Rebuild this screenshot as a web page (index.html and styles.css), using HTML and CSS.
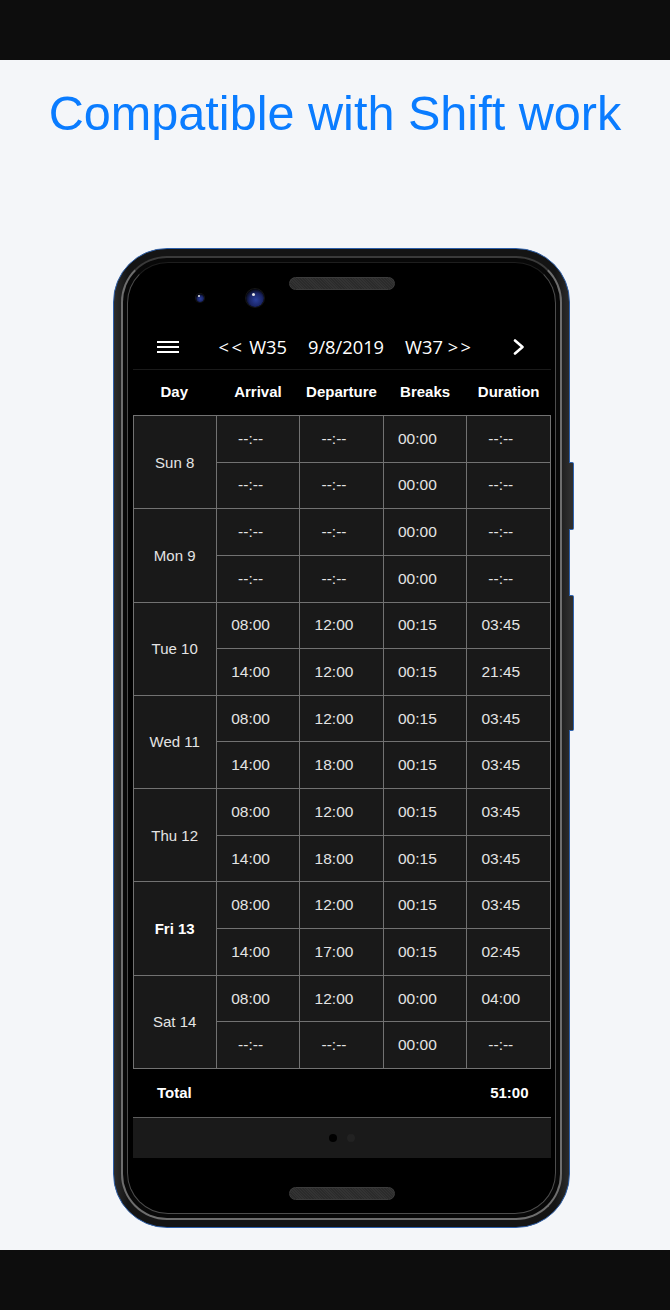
FILE: index.html
```html
<!DOCTYPE html>
<html lang="en">
<head>
<meta charset="utf-8">
<title>Compatible with Shift work</title>
<link rel="stylesheet" href="styles.css">
</head>
<body>
<div class="bar"></div>
<main class="stage">
  <h1 class="title">Compatible with Shift work</h1>
  <div class="phone">
    <span class="side-btn side-btn-1"></span>
    <span class="side-btn side-btn-2"></span>
    <div class="ring">
      <div class="screen">
        <div class="bezel">
          <span class="cam cam-sm"></span>
          <span class="cam cam-lg"></span>
          <span class="speaker"></span>
        </div>
        <nav class="nav">
          <span class="menu"><i></i><i></i><i></i></span>
          <span class="nav-item nav-first"><span class="arrows">&lt;&lt;</span> W35</span>
          <span class="nav-item">9/8/2019</span>
          <span class="nav-item">W37 <span class="arrows">&gt;&gt;</span></span>
          <svg class="chev" width="12" height="16" viewBox="0 0 12 16"><polyline points="2,1.5 9.5,8 2,14.5" fill="none" stroke="#fff" stroke-width="2.6" stroke-linecap="round" stroke-linejoin="round"/></svg>
        </nav>
        <div class="thead">
          <span>Day</span><span>Arrival</span><span>Departure</span><span>Breaks</span><span>Duration</span>
        </div>
        <div class="grid">
          <div class="day">Sun 8</div>
          <div class="c">--:--</div><div class="c">--:--</div><div class="c">00:00</div><div class="c">--:--</div>
          <div class="c">--:--</div><div class="c">--:--</div><div class="c">00:00</div><div class="c">--:--</div>

          <div class="day">Mon 9</div>
          <div class="c">--:--</div><div class="c">--:--</div><div class="c">00:00</div><div class="c">--:--</div>
          <div class="c">--:--</div><div class="c">--:--</div><div class="c">00:00</div><div class="c">--:--</div>

          <div class="day">Tue 10</div>
          <div class="c">08:00</div><div class="c">12:00</div><div class="c">00:15</div><div class="c">03:45</div>
          <div class="c">14:00</div><div class="c">12:00</div><div class="c">00:15</div><div class="c">21:45</div>

          <div class="day">Wed 11</div>
          <div class="c">08:00</div><div class="c">12:00</div><div class="c">00:15</div><div class="c">03:45</div>
          <div class="c">14:00</div><div class="c">18:00</div><div class="c">00:15</div><div class="c">03:45</div>

          <div class="day">Thu 12</div>
          <div class="c">08:00</div><div class="c">12:00</div><div class="c">00:15</div><div class="c">03:45</div>
          <div class="c">14:00</div><div class="c">18:00</div><div class="c">00:15</div><div class="c">03:45</div>

          <div class="day today">Fri 13</div>
          <div class="c">08:00</div><div class="c">12:00</div><div class="c">00:15</div><div class="c">03:45</div>
          <div class="c">14:00</div><div class="c">17:00</div><div class="c">00:15</div><div class="c">02:45</div>

          <div class="day">Sat 14</div>
          <div class="c">08:00</div><div class="c">12:00</div><div class="c">00:00</div><div class="c">04:00</div>
          <div class="c">--:--</div><div class="c">--:--</div><div class="c">00:00</div><div class="c">--:--</div>
        </div>
        <div class="total"><span>Total</span><span>51:00</span></div>
        <div class="pager"><span class="dot dot-on"></span><span class="dot"></span></div>
        <span class="speaker speaker-bottom"></span>
      </div>
    </div>
  </div>
</main>
<div class="bar"></div>
</body>
</html>
```

FILE: styles.css
```css
* { box-sizing: border-box; }

html, body {
  margin: 0;
  padding: 0;
  background: #0d0d0d;
}

body {
  width: 670px;
  height: 1310px;
  font-family: "Liberation Sans", Arial, sans-serif;
}

.bar {
  height: 60px;
  background: #0d0d0d;
}

.stage {
  height: 1190px;
  background: #f4f6f9;
  padding-top: 29px;
}

.title {
  margin: 0;
  text-align: center;
  font-family: "Liberation Sans", Arial, sans-serif;
  font-weight: 400;
  font-size: 48.6px;
  line-height: 48px;
  color: #0a7cff;
}

.phone {
  position: relative;
  width: 457px;
  height: 980px;
  margin: 111px 0 0 113px;
  border: 1px solid #2c5ea8;
  border-radius: 54px;
  padding: 7px;
  background: linear-gradient(90deg, #2c2c2c 0%, #141414 3%, #141414 97%, #2c2c2c 100%);
}

.side-btn {
  position: absolute;
  right: -5px;
  width: 5px;
  background: #2d2d2d;
  border: 1px solid #2f64b0;
  border-left: none;
  border-radius: 0 2px 2px 0;
}
.side-btn-1 { top: 213px; height: 68px; }
.side-btn-2 { top: 346px; height: 136px; }

.ring {
  height: 100%;
  border: 2px solid #6e6e6e;
  border-top-color: #3a3a3a;
  border-radius: 46px;
  padding: 4px;
  background: #080808;
}

.screen {
  height: 100%;
  border: 1.5px solid #4d4d4d;
  border-top-color: #1e1e1e;
  border-radius: 41px;
  background: #000;
  padding: 0 4.5px;
  display: flex;
  flex-direction: column;
  overflow: hidden;
}

/* top bezel */
.bezel {
  height: 61.5px;
  flex: none;
  display: flex;
  align-items: flex-start;
  padding-left: 63px;
}

.cam {
  border-radius: 50%;
  flex: none;
  background: radial-gradient(circle at 55% 60%, #2a3f9a 0%, #1a2566 45%, #05060d 75%);
  box-shadow: 0 0 0 1px #151515;
  position: relative;
}
.cam::after {
  content: "";
  position: absolute;
  border-radius: 50%;
  background: #e8e8e8;
}
.cam-sm { width: 8px; height: 8px; margin-top: 30.5px; }
.cam-sm::after { width: 2px; height: 2px; left: 2px; top: 1.5px; }
.cam-lg { width: 18px; height: 18px; margin-top: 26px; margin-left: 42px; }
.cam-lg::after { width: 3px; height: 3px; left: 6px; top: 4px; }

.speaker {
  width: 106px;
  height: 13px;
  flex: none;
  border-radius: 7px;
  background: repeating-linear-gradient(45deg, #2b2b2b 0 1px, #333 1px 2px);
  border: 1px solid #3c3c3c;
  margin-top: 13.5px;
  margin-left: 25px;
}
.speaker-bottom {
  margin: 29px auto 0;
}

/* nav */
.nav {
  height: 45px;
  flex: none;
  display: flex;
  align-items: center;
  padding-left: 24px;
  padding-right: 26px;
  border-bottom: 1px solid #1a1a1a;
  font-family: "Open Sans", "Noto Sans", sans-serif;
  font-size: 18.3px;
  color: #fff;
}

.menu {
  width: 22px;
  height: 12px;
  display: flex;
  flex-direction: column;
  justify-content: space-between;
  margin-top: 1px;
}
.menu i {
  display: block;
  height: 2px;
  background: #fff;
}

.nav-item {
  margin-left: 21px;
  white-space: nowrap;
}
.nav-first { margin-left: 40px; }

.arrows {
  letter-spacing: 2.5px;
}

.chev {
  margin-left: auto;
  margin-top: 1px;
}

/* table header */
.thead {
  height: 45.5px;
  flex: none;
  display: grid;
  grid-template-columns: repeat(5, 1fr);
  align-items: center;
  text-align: center;
  font-weight: 700;
  font-size: 15px;
  color: #fff;
  padding-bottom: 1px;
}

/* table */
.grid {
  height: 654px;
  flex: none;
  display: grid;
  grid-template-columns: repeat(5, 1fr);
  grid-template-rows: repeat(14, 1fr);
  gap: 1px;
  padding: 1px;
  background: #727272;
}

.grid > div {
  background: #191919;
  color: #e4e4e4;
  font-size: 15.5px;
  display: flex;
  align-items: center;
  justify-content: center;
}

.grid .day {
  grid-row: span 2;
  font-size: 15px;
}
.grid .today { font-weight: 700; color: #fff; }

.grid .c {
  padding-right: 15px;
}

/* total */
.total {
  height: 47.5px;
  flex: none;
  display: flex;
  align-items: center;
  justify-content: space-between;
  padding: 0 22px 0 24.5px;
  font-weight: 700;
  font-size: 15px;
  color: #fff;
}

/* pager */
.pager {
  height: 41px;
  flex: none;
  border-top: 1px solid #5e5e5e;
  background: #1a1a1a;
  display: flex;
  align-items: center;
  justify-content: center;
  gap: 10px;
}
.dot {
  width: 8px;
  height: 8px;
  border-radius: 50%;
  background: #222;
}
.dot-on { background: #000; }
```
